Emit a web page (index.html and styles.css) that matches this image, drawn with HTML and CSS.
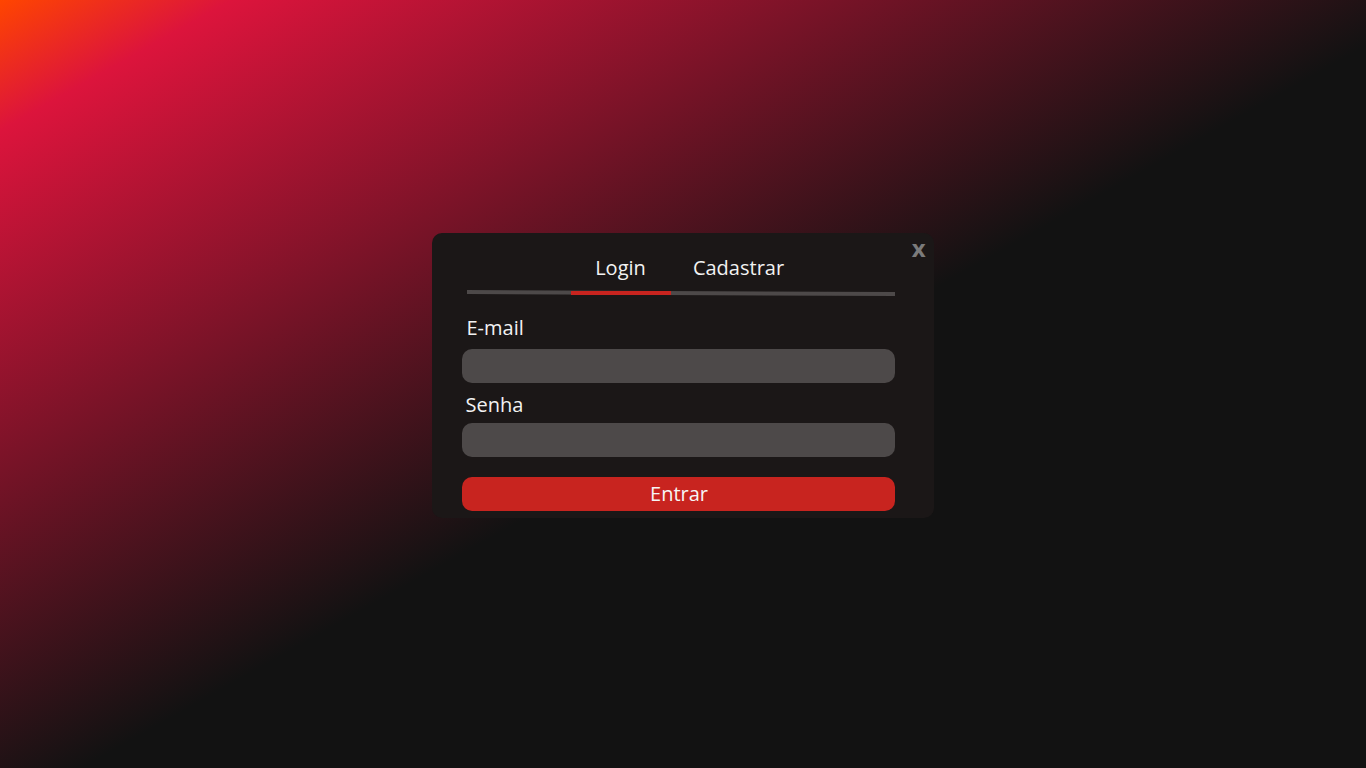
FILE: index.html
```html
<!DOCTYPE html>
<html lang="pt-BR">
<head>
<meta charset="utf-8">
<title>Login</title>
<link rel="stylesheet" href="styles.css">
</head>
<body>
<main class="stage">
  <section class="card">
    <button class="close" type="button">x</button>
    <nav class="tabs">
      <span class="tab active">Login</span>
      <span class="tab">Cadastrar</span>
    </nav>
    <div class="track">
      <div class="track-line"></div>
      <div class="track-active"></div>
    </div>
    <form class="form">
      <label class="label label-email" for="email">E-mail</label>
      <input class="field" id="email" type="email">
      <label class="label label-pass" for="senha">Senha</label>
      <input class="field" id="senha" type="password">
      <button class="submit" type="button">Entrar</button>
    </form>
  </section>
</main>
</body>
</html>
```

FILE: styles.css
```css
* { box-sizing: border-box; }

html, body {
  margin: 0;
  height: 100%;
}

body {
  font-family: "Open Sans", "Noto Sans", sans-serif;
  background: linear-gradient(to bottom right, #ff4500 0%, #dc143c 8.5%, #121212 53%, #121212 100%);
  color: #f2f2f2;
}

.stage {
  height: 100vh;
  display: flex;
  align-items: center;
  justify-content: center;
  padding-bottom: 17px;
  padding-right: 1px;
}

.card {
  position: relative;
  width: 502px;
  background: #1b1717;
  border-radius: 10px;
  padding: 21px 39px 7px 30px;
}

.close {
  position: absolute;
  top: 0;
  right: 8px;
  margin-top: -2px;
  border: 0;
  background: none;
  padding: 0;
  font-family: "Open Sans", sans-serif;
  font-weight: 700;
  font-size: 24px;
  line-height: 33px;
  color: #7b7b7b;
  cursor: pointer;
}

.tabs {
  display: flex;
  gap: 18px;
  padding-left: 109px;
}

.tab {
  width: 100px;
  text-align: center;
  font-size: 20px;
  line-height: 27px;
  color: #f2f2f2;
}

.track {
  position: relative;
  height: 6px;
  margin: 10px 0 0 5px;
}

.track-line {
  margin-top: 1px;
  height: 4px;
  background: #4d4949;
  transform: rotate(0.27deg);
}

.track-active {
  position: absolute;
  left: 104px;
  top: 0;
  width: 100px;
  height: 4px;
  background: #c8241f;
}

.form {
  display: flex;
  flex-direction: column;
}

.label {
  font-size: 20px;
  line-height: 27px;
  padding-left: 4px;
  color: #f2f2f2;
}

.label-email { margin: 17px 0 8px; padding-left: 5px; }
.label-pass { margin: 8px 0 5px; }

.field {
  height: 34px;
  border: 0;
  border-radius: 10px;
  background: #4d4949;
  outline: none;
  color: #f2f2f2;
  font-family: inherit;
  font-size: 16px;
  padding: 0 12px;
}

.submit {
  margin-top: 20px;
  height: 34px;
  border: 0;
  border-radius: 10px;
  background: #c8241f;
  color: #f6f6f6;
  font-family: inherit;
  font-size: 20px;
  line-height: 25px;
  padding: 0 0 2px 2px;
  cursor: pointer;
}
```
